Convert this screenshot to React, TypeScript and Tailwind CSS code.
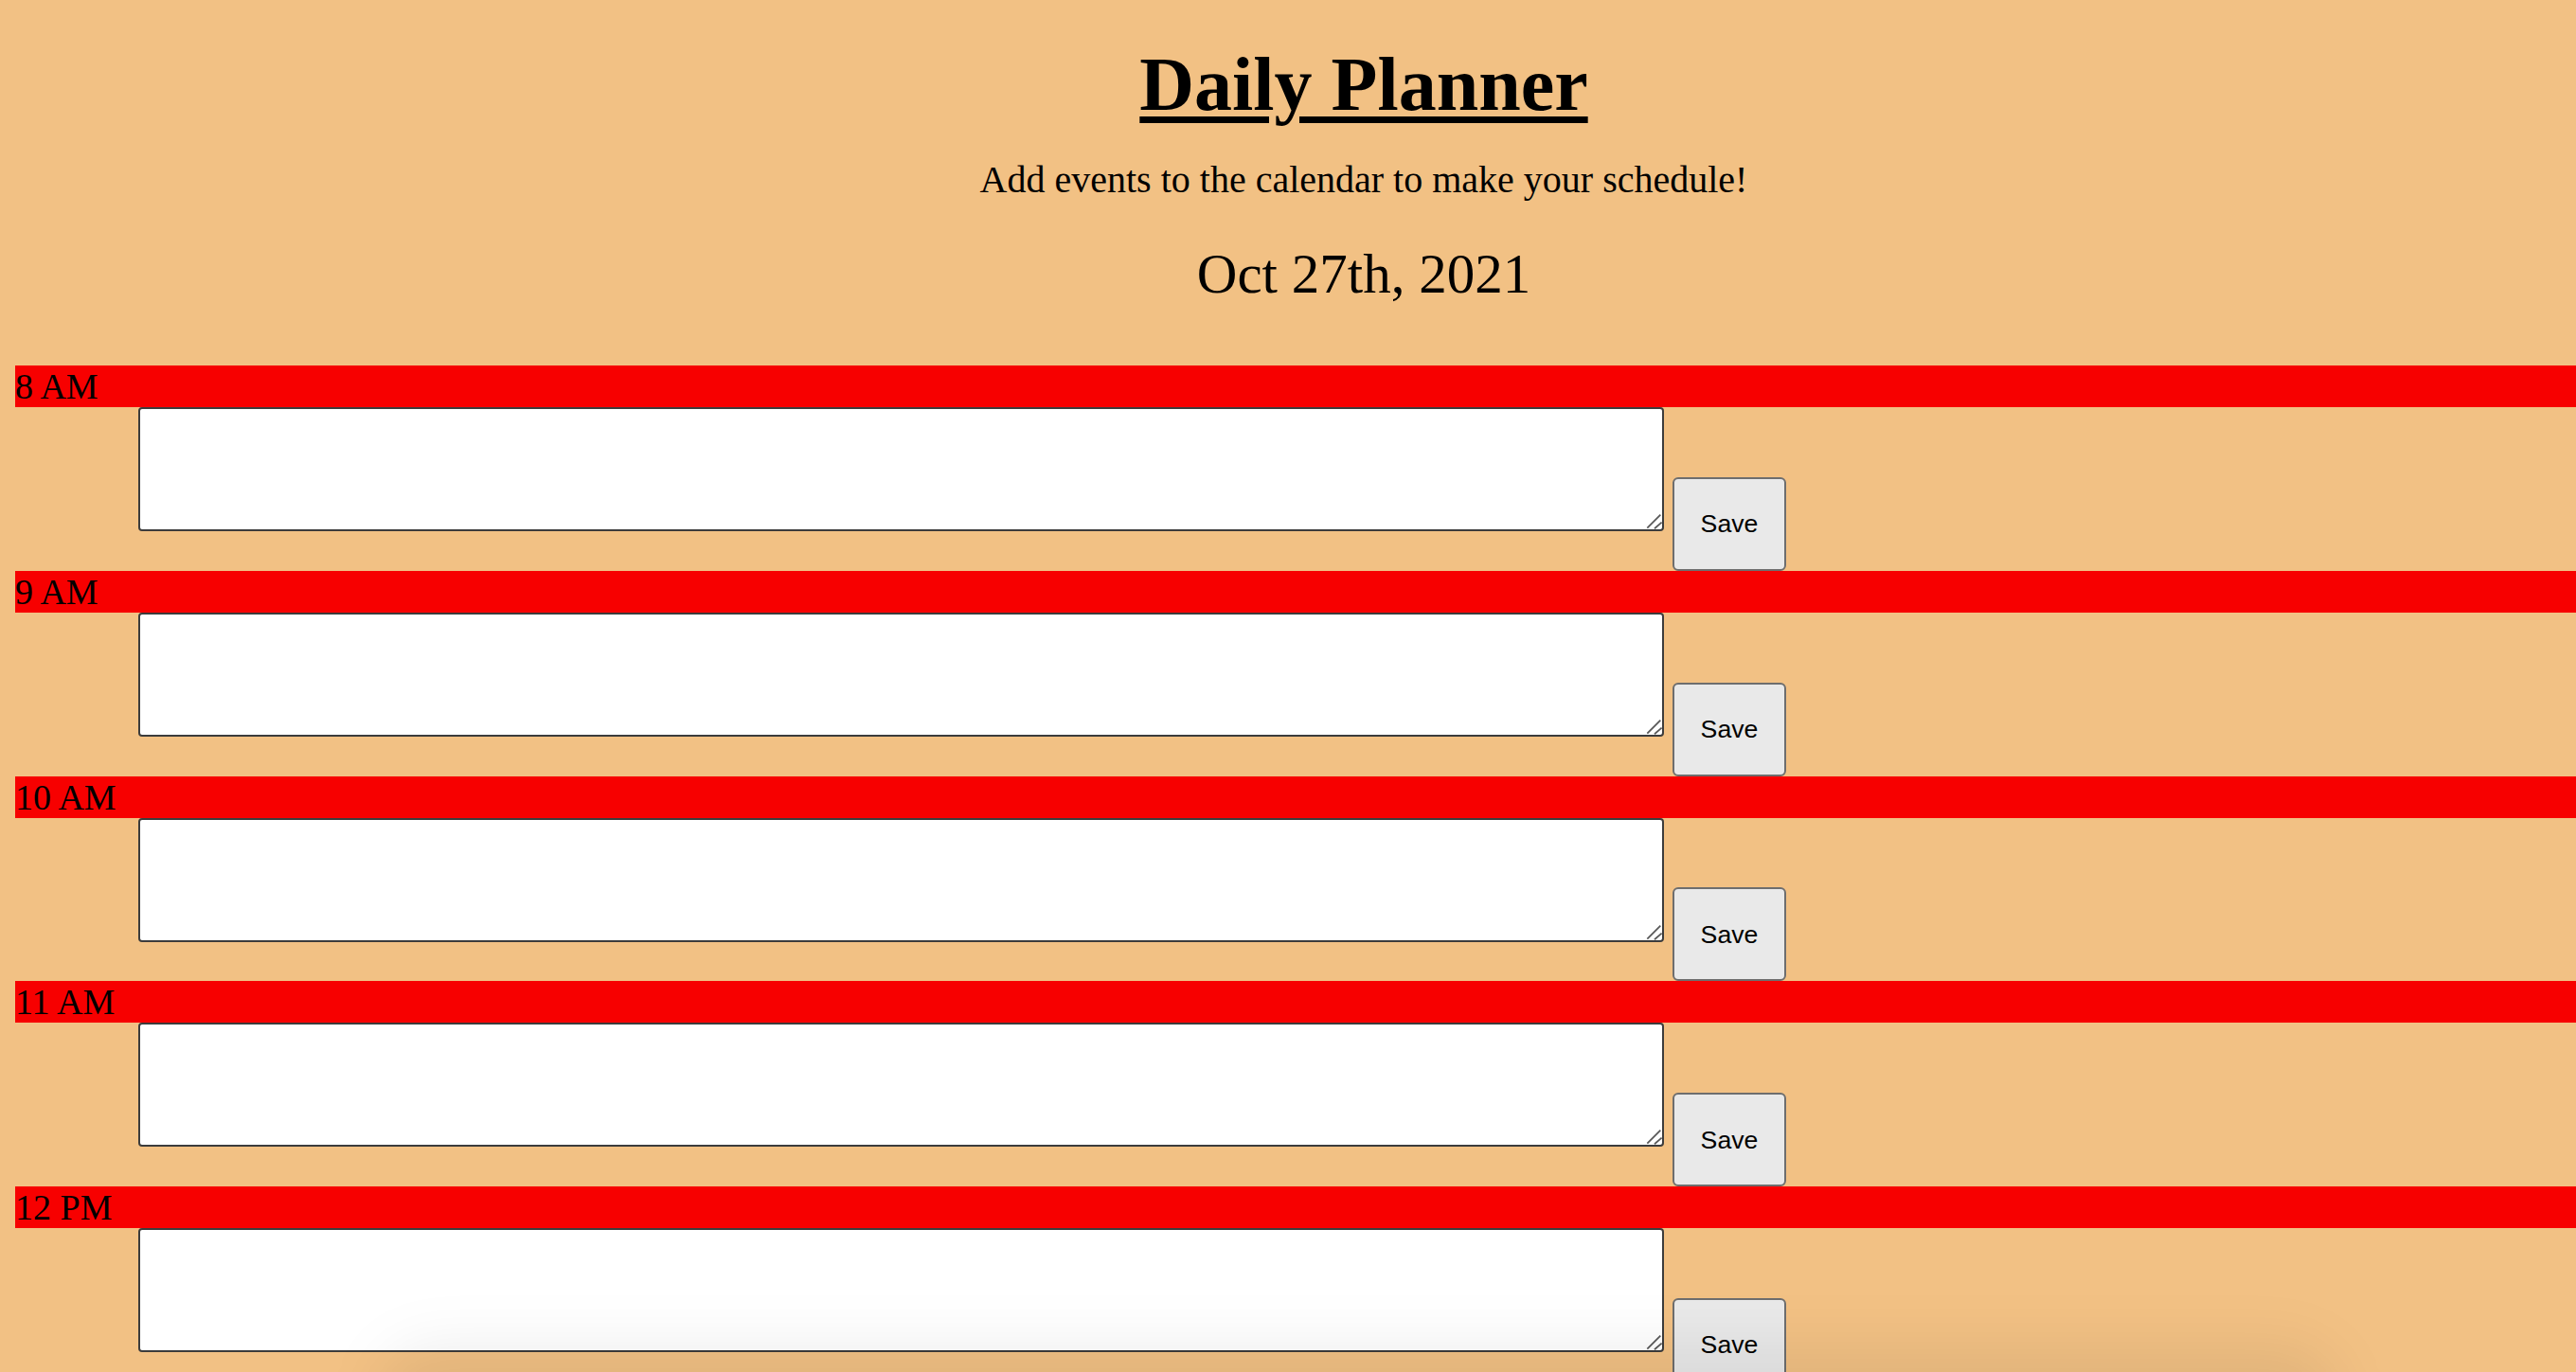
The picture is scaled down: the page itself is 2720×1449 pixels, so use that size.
import { useState } from "react";

const hours = ["8 AM", "9 AM", "10 AM", "11 AM", "12 PM"];

function HourRow({ label }: { label: string }) {
  const [text, setText] = useState("");

  return (
    <div className="flex flex-col">
      <div className="ml-[16px] h-[44px] bg-[#f70000] text-[38px] leading-[44px] text-black">
        {label}
      </div>
      <div className="flex h-[172.75px] items-end">
        <div className="relative ml-[146px] self-start">
          <textarea
            value={text}
            onChange={(e) => setText(e.target.value)}
            className="block h-[131px] w-[1611px] resize-none rounded-[4px] border-2 border-[#3c3c3c] bg-white px-[4px] py-[2px] text-[26px] outline-none"
          />
          {/* resize grip */}
          <svg
            className="pointer-events-none absolute bottom-0 right-0 h-[20px] w-[20px]"
            viewBox="0 0 20 20"
          >
            <line x1="2.3" y1="16.6" x2="16.3" y2="2.6" stroke="#595959" strokeWidth="1.8" />
            <line x1="10" y1="17.3" x2="17.6" y2="10.6" stroke="#595959" strokeWidth="1.8" />
          </svg>
        </div>
        <button
          type="button"
          className="ml-[9px] h-[99px] w-[120px] rounded-[6px] border-2 border-[#6e6e6e] bg-[#e9e9e9] font-['Liberation_Sans',Arial,sans-serif] text-[26.67px] text-black"
        >
          Save
        </button>
      </div>
    </div>
  );
}

export default function App() {
  return (
    <div className="relative min-h-screen overflow-hidden bg-[#f2c184] font-['Liberation_Serif','Times_New_Roman',serif] text-black">
      <header className="flex flex-col items-center pl-[160px]">
        <h1 className="mt-[43px] text-[80px] font-bold leading-[92px] underline decoration-[7px] underline-offset-[7px]">
          Daily Planner
        </h1>
        <p className="mt-[31.5px] text-[40px] leading-[46px]">
          Add events to the calendar to make your schedule!
        </p>
        <p className="mt-[42.75px] text-[59px] leading-[69px]">Oct 27th, 2021</p>
      </header>

      <main className="mt-[61.75px] flex flex-col">
        {hours.map((h) => (
          <HourRow key={h} label={h} />
        ))}
      </main>

      {/* soft shadow over the bottom edge */}
      <div className="pointer-events-none absolute bottom-[-100px] left-[400px] z-10 h-[149px] w-[2070px] rounded-[60px] bg-black/[0.065] blur-[30px]" />
    </div>
  );
}
